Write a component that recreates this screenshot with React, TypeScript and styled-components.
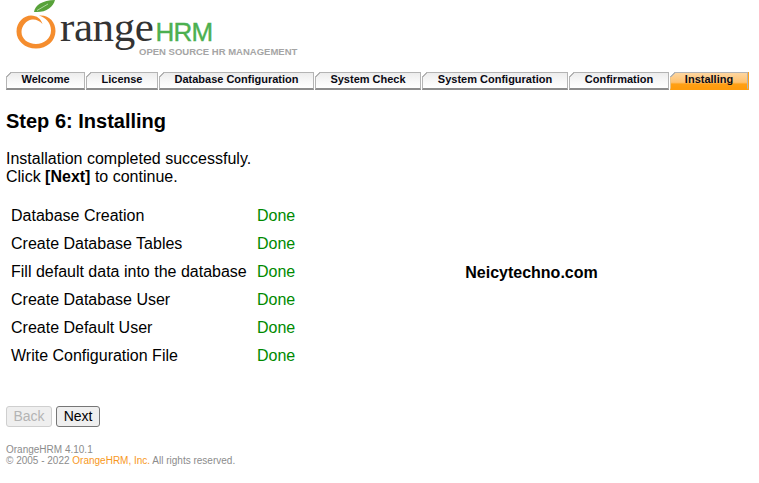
import React from "react";
import styled, { createGlobalStyle } from "styled-components";

const GlobalStyle = createGlobalStyle`
  html, body {
    margin: 0;
    padding: 0;
    background: #fff;
    color: #000;
    font-family: "Liberation Sans", Arial, sans-serif;
  }
`;

const SPage = styled.div`
  width: 759px;
  height: 483px;
  overflow: hidden;
  display: flex;
  flex-direction: column;
`;

const SLogo = styled.div`
  height: 72px;
  padding-left: 15px;
  display: flex;
  align-items: flex-start;
`;

const SMark = styled.svg`
  width: 44px;
  height: 50px;
  flex: none;
`;

const SWordmark = styled.div`
  margin-left: 1px;
  display: flex;
  flex-direction: column;
`;

const SName = styled.div`
  display: flex;
  align-items: baseline;
  height: 46px;
  padding-top: 8px;
  box-sizing: border-box;
  line-height: 38px;
`;

const SRange = styled.span`
  font-family: "Liberation Serif", serif;
  font-size: 43px;
  letter-spacing: -0.4px;
  color: #333;
`;

const SHrm = styled.span`
  font-family: "Liberation Sans", sans-serif;
  font-size: 26px;
  letter-spacing: -0.8px;
  color: #4cb050;
  -webkit-text-stroke: 0.4px #4cb050;
  margin-left: 2px;
`;

const STagline = styled.div`
  margin-left: 79px;
  font-size: 9.5px;
  line-height: 11px;
  font-weight: 700;
  color: #a5a5a5;
  white-space: nowrap;
`;

const STabs = styled.div`
  display: flex;
  margin-left: 6px;
  gap: 1px;
  height: 18px;
`;

const STab = styled.div<{ $width: number; $active?: boolean }>`
  position: relative;
  width: ${(p) => p.$width}px;
  box-sizing: border-box;
  border: 1px solid #b4b4b4;
  border-left-color: ${(p) => (p.$active ? "#e8c48c" : "#b4b4b4")};
  border-bottom: 2px solid ${(p) => (p.$active ? "#ff9c0d" : "#8d8d8d")};
  background: ${(p) =>
    p.$active
      ? "linear-gradient(#fdd6a0 0%, #ffc270 62%, #ffa015 74%, #ff9c0d 100%)"
      : "linear-gradient(#ececec 0%, #f8f8f8 55%, #ffffff 100%)"};
  font-size: 11px;
  font-weight: 700;
  line-height: 13px;
  text-align: center;
  color: #0a0a14;
  white-space: nowrap;

  /* cut corner at the top left of every tab */
  &::before {
    content: "";
    position: absolute;
    top: -1px;
    left: -1px;
    width: 5px;
    height: 5px;
    background: linear-gradient(
      135deg,
      #fff 0 46%,
      #b4b4b4 46% 62%,
      transparent 62%
    );
  }
`;

const SActiveEdge = styled.div`
  width: 1px;
  margin-left: -1px;
  background: #ffa21c;
`;

const SContent = styled.div`
  padding: 20px 0 0 6px;
  display: flex;
  flex-direction: column;
`;

const STitle = styled.h2`
  margin: 0;
  font-size: 20px;
  line-height: 23px;
  font-weight: 700;
`;

const SMessage = styled.p`
  margin: 17px 0 0;
  font-size: 16px;
  line-height: 18px;
`;

const SStage = styled.div`
  margin-top: 16px;
  display: flex;
  align-items: flex-start;
`;

const STable = styled.div`
  display: grid;
  grid-template-columns: 246px auto;
  grid-auto-rows: 28px;
  align-items: center;
  padding-left: 5px;
  font-size: 16px;
`;

const SDone = styled.span`
  color: #008a00;
`;

const SWatermark = styled.div`
  margin-left: 170px;
  margin-top: 62px;
  font-size: 16px;
  line-height: 18px;
  font-weight: 700;
`;

const SActions = styled.div`
  margin-top: 36px;
  display: flex;
  gap: 4px;
`;

const SButton = styled.button`
  height: 21px;
  padding: 0 6.5px;
  box-sizing: border-box;
  border: 1px solid #767676;
  border-radius: 3px;
  background: #efefef;
  color: #000;
  font-family: "Liberation Sans", sans-serif;
  font-size: 14px;
  line-height: 17px;

  &:disabled {
    border-color: #cfcfcf;
    color: #b4b4b4;
    background: #efefef;
  }
`;

const SFooter = styled.div`
  margin-top: 17px;
  font-size: 10px;
  line-height: 11px;
  color: #8c8c8c;
`;

const SLink = styled.span`
  color: #f7981d;
`;

const tabs = [
  { label: "Welcome", width: 79 },
  { label: "License", width: 72 },
  { label: "Database Configuration", width: 155 },
  { label: "System Check", width: 106 },
  { label: "System Configuration", width: 146 },
  { label: "Confirmation", width: 100 },
  { label: "Installing", width: 78, active: true },
];

const steps = [
  "Database Creation",
  "Create Database Tables",
  "Fill default data into the database",
  "Create Database User",
  "Create Default User",
  "Write Configuration File",
];

export default function App() {
  return (
    <SPage>
      <GlobalStyle />
      <SLogo>
        <SMark viewBox="0 0 44 50" aria-hidden="true">
          <path
            d="M24 15.500 C34 14.500 40.500 22 40.500 31 C40.500 41 32 48.500 21 48.500 C10 48.500 1.500 41 1.500 31.500 C1.500 22 9 15.500 16 15.500 C22 15.500 26 19 27.500 24 C24.500 20.500 20.500 19 17 19.500 C11 20.500 6.500 26 6.500 32 C6.500 39 13 44 21 44 C29 44 36 38.500 36 30.500 C36 23 31 17.500 24 15.500 Z"
            fill="#f58d2e"
          />
          <path
            d="M19 12 C20 5 27 0.500 40 0 C38 7 31 13 19 12 Z"
            fill="#58a23a"
          />
          <path d="M22 10.500 L33 4" stroke="#d8ecd0" strokeWidth="0.7" fill="none" />
        </SMark>
        <SWordmark>
          <SName>
            <SRange>range</SRange>
            <SHrm>HRM</SHrm>
          </SName>
          <STagline>OPEN SOURCE HR MANAGEMENT</STagline>
        </SWordmark>
      </SLogo>
      <STabs>
        {tabs.map((tab) => (
          <STab key={tab.label} $width={tab.width} $active={tab.active}>
            {tab.label}
          </STab>
        ))}
        <SActiveEdge />
      </STabs>
      <SContent>
        <STitle>Step 6: Installing</STitle>
        <SMessage>
          Installation completed successfuly.
          <br />
          Click <b>[Next]</b> to continue.
        </SMessage>
        <SStage>
          <STable>
            {steps.map((step) => (
              <React.Fragment key={step}>
                <span>{step}</span>
                <SDone>Done</SDone>
              </React.Fragment>
            ))}
          </STable>
          <SWatermark>Neicytechno.com</SWatermark>
        </SStage>
        <SActions>
          <SButton disabled>Back</SButton>
          <SButton>Next</SButton>
        </SActions>
        <SFooter>
          OrangeHRM 4.10.1
          <br />© 2005 - 2022 <SLink>OrangeHRM, Inc.</SLink> All rights reserved.
        </SFooter>
      </SContent>
    </SPage>
  );
}
